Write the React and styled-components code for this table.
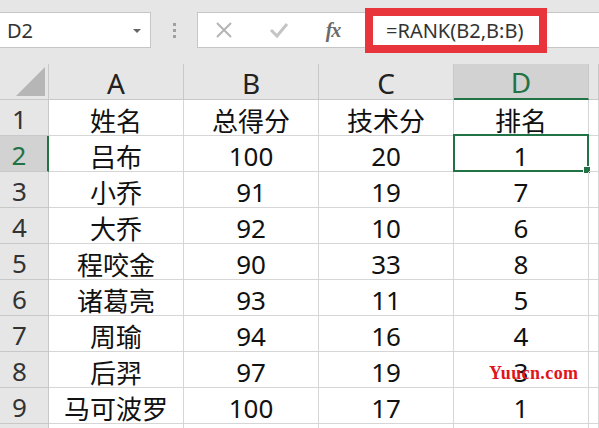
import React from "react";
import styled, { createGlobalStyle } from "styled-components";

const GlobalStyle = createGlobalStyle`
  html, body {
    margin: 0;
    padding: 0;
    background: #ffffff;
    overflow: hidden;
  }
  body {
    font-family: "Noto Sans", "Noto Sans CJK SC", sans-serif;
  }
`;

const Page = styled.div`
  position: relative;
  width: 599px;
  height: 428px;
  overflow: hidden;
  background: #ffffff;
`;

const Toolbar = styled.div`
  height: 64px;
  background: #e6e6e6;
  display: flex;
  align-items: center;
  padding-bottom: 4px;
  box-sizing: border-box;
`;

const NameBox = styled.div`
  width: 151px;
  height: 36px;
  box-sizing: border-box;
  background: #ffffff;
  border: 1px solid #c6c6c6;
  border-left: none;
  display: flex;
  align-items: center;
  justify-content: space-between;
  padding: 0 9px 0 7px;
  font-size: 20px;
  color: #333333;
`;

const Caret = styled.span`
  width: 0;
  height: 0;
  border-left: 4px solid transparent;
  border-right: 4px solid transparent;
  border-top: 4px solid #666666;
  margin-top: 2px;
`;

const Grip = styled.div`
  width: 46px;
  display: flex;
  flex-direction: column;
  align-items: center;
  gap: 3px;
`;

const GripDot = styled.span`
  width: 3px;
  height: 3px;
  background: #a0a0a0;
`;

const FormulaBar = styled.div`
  flex: 1;
  height: 36px;
  box-sizing: border-box;
  background: #ffffff;
  border: 1px solid #c6c6c6;
  border-right: none;
  display: flex;
  align-items: center;
`;

const IconSlot = styled.div`
  width: ${(p) => p.$w}px;
  display: flex;
  justify-content: center;
  align-items: center;
`;

const Fx = styled.span`
  font-family: "Liberation Serif", "DejaVu Serif", serif;
  font-style: italic;
  font-weight: bold;
  font-size: 20px;
  color: #6a6a6a;
  letter-spacing: -1px;
`;

const Annotated = styled.div`
  margin-left: 7px;
  width: 182px;
  height: 45px;
  box-sizing: border-box;
  border: 8px solid #e8353b;
  background: #ffffff;
  display: flex;
  align-items: center;
  padding-left: 13px;
  font-size: 20px;
  color: #333333;
  white-space: nowrap;
`;

const Sheet = styled.div`
  display: grid;
  grid-template-columns: 49px repeat(4, 135px) 1fr;
  grid-auto-rows: 36px;
  background: #ffffff;
`;

const Corner = styled.div`
  background: #e6e6e6;
  border-right: 1px solid #c8c8c8;
  border-bottom: 1px solid #c8c8c8;
  display: flex;
  align-items: flex-end;
  justify-content: flex-end;
  padding: 0 3px 3px 0;
`;

const ColHead = styled.div`
  background: ${(p) => (p.$active ? "#d2d2d2" : "#e6e6e6")};
  color: ${(p) => (p.$active ? "#217346" : "#222222")};
  border-right: 1px solid #c8c8c8;
  border-bottom: ${(p) => (p.$active ? "2px solid #217346" : "1px solid #c8c8c8")};
  box-sizing: border-box;
  display: flex;
  align-items: center;
  justify-content: center;
  font-size: 28px;
  padding-top: 2px;
`;

const RowHead = styled.div`
  background: ${(p) => (p.$active ? "#d2d2d2" : "#e6e6e6")};
  color: ${(p) => (p.$active ? "#217346" : "#333333")};
  border-right: ${(p) => (p.$active ? "2px solid #217346" : "1px solid #c8c8c8")};
  border-bottom: 1px solid #c8c8c8;
  box-sizing: border-box;
  display: flex;
  align-items: center;
  justify-content: center;
  padding: 3px 9px 0 0;
  font-size: 26px;
`;

const Cell = styled.div`
  position: relative;
  border-right: 1px solid #d6d6d6;
  border-bottom: 1px solid #d6d6d6;
  box-sizing: border-box;
  display: flex;
  align-items: center;
  justify-content: center;
  padding-top: 4px;
  font-size: 26px;
  color: #111111;
  white-space: nowrap;
`;

const Selection = styled.div`
  position: absolute;
  left: -1px;
  top: -2px;
  right: -1px;
  bottom: -1px;
  border: 2px solid #217346;
  pointer-events: none;
`;

const FillHandle = styled.span`
  position: absolute;
  right: -4px;
  bottom: -4px;
  width: 6px;
  height: 6px;
  background: #217346;
  border: 1px solid #ffffff;
`;

const Watermark = styled.div`
  position: absolute;
  left: 489px;
  top: 363px;
  font-family: "Liberation Serif", "DejaVu Serif", serif;
  font-weight: bold;
  font-size: 18px;
  color: #e0151b;
  letter-spacing: 0.4px;
`;

const rows = [
  ["姓名", "总得分", "技术分", "排名"],
  ["吕布", "100", "20", "1"],
  ["小乔", "91", "19", "7"],
  ["大乔", "92", "10", "6"],
  ["程咬金", "90", "33", "8"],
  ["诸葛亮", "93", "11", "5"],
  ["周瑜", "94", "16", "4"],
  ["后羿", "97", "19", "3"],
  ["马可波罗", "100", "17", "1"],
  ["", "", "", ""],
];

const cols = ["A", "B", "C", "D"];

export default function App() {
  return (
    <Page>
      <GlobalStyle />
      <Toolbar>
        <NameBox>
          D2
          <Caret />
        </NameBox>
        <Grip>
          <GripDot />
          <GripDot />
          <GripDot />
        </Grip>
        <FormulaBar>
          <IconSlot $w={52}>
            <svg width="18" height="18" viewBox="0 0 18 18">
              <path d="M2 2 L16 16 M16 2 L2 16" stroke="#b4b4b4" strokeWidth="2" fill="none" />
            </svg>
          </IconSlot>
          <IconSlot $w={58}>
            <svg width="20" height="18" viewBox="0 0 20 18">
              <path d="M2 9 L8 15 L18 3" stroke="#c4c4c4" strokeWidth="3" fill="none" />
            </svg>
          </IconSlot>
          <IconSlot $w={50}>
            <Fx>fx</Fx>
          </IconSlot>
          <Annotated>=RANK(B2,B:B)</Annotated>
        </FormulaBar>
      </Toolbar>
      <Sheet>
        <Corner>
          <svg width="29" height="29" viewBox="0 0 29 29">
            <polygon points="29,0 29,29 0,29" fill="#b6b6b6" />
          </svg>
        </Corner>
        {cols.map((c) => (
          <ColHead key={c} $active={c === "D"}>
            {c}
          </ColHead>
        ))}
        <ColHead />
        {rows.map((r, i) => (
          <React.Fragment key={i}>
            <RowHead $active={i === 1}>{i < 9 ? i + 1 : ""}</RowHead>
            {r.map((v, j) => (
              <Cell key={j}>
                {v}
                {i === 1 && j === 3 && (
                  <Selection>
                    <FillHandle />
                  </Selection>
                )}
              </Cell>
            ))}
            <Cell />
          </React.Fragment>
        ))}
      </Sheet>
      <Watermark>Yuucn.com</Watermark>
    </Page>
  );
}
